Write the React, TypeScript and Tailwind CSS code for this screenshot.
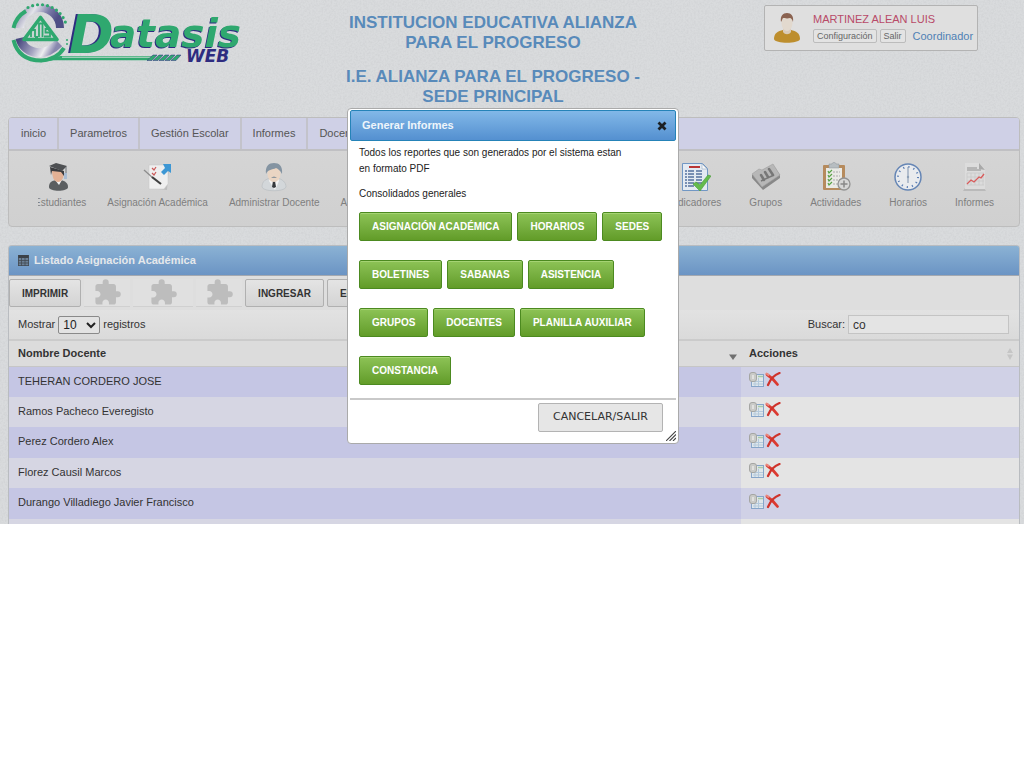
import React from "react";
import { MdExtension } from "react-icons/md";

const menu = ["inicio", "Parametros", "Gestión Escolar", "Informes", "Docentes"];

const reportRows = [
  ["ASIGNACIÓN ACADÉMICA", "HORARIOS", "SEDES"],
  ["BOLETINES", "SABANAS", "ASISTENCIA"],
  ["GRUPOS", "DOCENTES", "PLANILLA AUXILIAR"],
  ["CONSTANCIA"],
];

const teachers = [
  "TEHERAN CORDERO JOSE",
  "Ramos Pacheco Everegisto",
  "Perez Cordero Alex",
  "Florez Causil Marcos",
  "Durango Villadiego Javier Francisco",
];

function Grain() {
  return (
    <svg className="absolute inset-0 -z-10 h-full w-full" aria-hidden="true">
      <filter id="grain">
        <feTurbulence type="fractalNoise" baseFrequency="0.55" numOctaves="2" seed="4" />
        <feColorMatrix type="matrix" values="0 0 0 0 0.45  0 0 0 0 0.46  0 0 0 0 0.48  0.9 0 0 0 -0.33" />
      </filter>
      <rect width="100%" height="100%" filter="url(#grain)" opacity="0.45" />
    </svg>
  );
}

function Logo() {
  return (
    <svg viewBox="0 0 240 66" className="h-[66px] w-[240px]" role="img" aria-label="Datasis WEB">
      <defs>
        <linearGradient id="ringTop" x1="0" x2="1" y1="0" y2="0.3">
          <stop offset="0" stopColor="#8d8fae" />
          <stop offset="0.35" stopColor="#e4e4ea" />
          <stop offset="0.7" stopColor="#7c7ca8" />
          <stop offset="1" stopColor="#4f4f86" />
        </linearGradient>
        <linearGradient id="ringBottom" x1="0" x2="1" y1="0" y2="0.2">
          <stop offset="0" stopColor="#48487f" />
          <stop offset="0.5" stopColor="#a9a9c4" />
          <stop offset="0.75" stopColor="#ededf0" />
          <stop offset="1" stopColor="#8888ae" />
        </linearGradient>
      </defs>
      <path d="M12 28A20 20 0 0 1 52 28" fill="none" stroke="url(#ringTop)" strokeWidth="8" />
      <path d="M12 38C15 52 34 60 51 43" fill="none" stroke="url(#ringBottom)" strokeWidth="9" />
      <path d="M5.500 28A26 26 0 0 1 18 11" fill="none" stroke="#2fa86f" strokeWidth="4" />
      <path d="M20 7.500A27 27 0 0 1 58.500 26" fill="none" stroke="#2fa86f" strokeWidth="3.200" strokeLinecap="round" strokeDasharray="0 5" />
      <path d="M59 40V47" fill="none" stroke="#2fa86f" strokeWidth="2" strokeLinecap="round" strokeDasharray="0 4" />
      <path d="M5.500 40C9 54 19 60.500 33 60.500C44 60 51 56 56 48" fill="none" stroke="#2fa86f" strokeWidth="4" />
      <path d="M32 62.500C42 60 48 60 54 60.300H140L144 56H52" fill="#2fa86f" />
      <path d="M54 57.200H143" stroke="#e1e4e3" strokeWidth="0.900" />
      {[139, 145, 151, 157, 163].map((x) => (
        <path key={x} d={`M${x} 60.500l6-5.500h4l-5 5.500z`} fill="#2fa86f" stroke="#2e2c80" strokeWidth="0.500" />
      ))}
      <path d="M32.500 17.500 49 39.500H16z" fill="#c9d5d3" stroke="#2fa86f" strokeWidth="3.600" strokeLinejoin="round" />
      <path d="M23 37v-7h4v7M27 37h3M31 37V23.500h3.500V37M42.500 29h-5v3.500h4.500v4h-6" fill="none" stroke="#2fa86f" strokeWidth="1.800" />
      <g className="font-['DejaVu_Sans',sans-serif] font-bold italic">
        <g className="[filter:drop-shadow(-2px_0.500px_0_#2e2c80)]">
          <text x="61" y="53" fontSize="54" fill="#2fa86f">D</text>
        </g>
        <g className="[filter:drop-shadow(-1px_1px_0_#2e2c80)]">
          <text x="102" y="47" fontSize="39" fill="#2fa86f">atasis</text>
        </g>
        <text x="178" y="62" fontSize="17" fill="#2e2c80">WEB</text>
      </g>
    </svg>
  );
}

function UserAvatar() {
  return (
    <svg viewBox="0 0 28 32" className="h-8 w-7" aria-hidden="true">
      <path d="M1 27c0-6 4-8 9-9h8c5 1 9 3 9 9-1 5-25 5-26 0z" fill="#bd8e2d" />
      <path d="M10 16h8v4c-2 3-6 3-8 0z" fill="#d9cbb9" />
      <ellipse cx="14" cy="11" rx="5.500" ry="8" fill="#e2d9ce" />
      <path d="M8 10C7 4 10 1 14 1s7 3 6 9c-1-3-2-4-3-4-3 1-6 0-7 0-1 1-1 3-2 4z" fill="#8a6250" />
    </svg>
  );
}

function StudentIcon() {
  return (
    <svg viewBox="0 0 30 30" className="h-[30px] w-[30px]" aria-hidden="true">
      <path d="M4 25c0-5 3-6 7-7h5c4 1 7 3 7 7 0 5-19 5-19 0z" fill="#5b5e60" />
      <path d="M10 18l4 5 3-5z" fill="#f0f0f0" />
      <path d="M7 8c0 7 2 12 6 12s6-5 6-11z" fill="#e3b195" />
      <path d="M5 5l14 4v5l-3-4-9-1-1 4z" fill="#3b3c3f" />
      <path d="M4 4 11 1l11 3-5 5z" fill="#4e5053" />
      <path d="M21 5v9" stroke="#6d7278" strokeWidth="1" />
      <path d="M19 11h3v6h-3z" fill="#a9bdd4" />
    </svg>
  );
}

function AssignmentIcon() {
  return (
    <svg viewBox="0 0 30 30" className="h-[30px] w-[30px]" aria-hidden="true">
      <path d="M7 6h19l-2 22-17-2z" fill="#bdbdbd" />
      <path d="M6 3h19v19l-4 5H6z" fill="#efefef" stroke="#c7c7c7" strokeWidth="0.500" />
      <path d="M9 6l2 2 2-3M9 11l2 2 2-3" fill="none" stroke="#cb5a5a" strokeWidth="1.200" />
      <path d="M20 2h8v9l-3-2-4 4-3-3 4-4z" fill="#3d97d4" />
      <path d="M1 8l9 8" stroke="#8d8d8d" strokeWidth="1.400" />
      <path d="M9 15l9 7" stroke="#3f3f3f" strokeWidth="2.200" />
    </svg>
  );
}

function TeacherIcon() {
  return (
    <svg viewBox="0 0 30 30" className="h-[30px] w-[30px]" aria-hidden="true">
      <path d="M3 25c0-6 4-8 9-9h6c5 1 9 4 9 9-1 5-23 5-24 0z" fill="#d3d7da" stroke="#aeb4b9" strokeWidth="0.500" />
      <path d="M11 16l4 6 4-6 1 3-4 9-6-9z" fill="#f4f4f4" />
      <path d="M14 19h2l1 6-2 1-2-1z" fill="#36393d" />
      <ellipse cx="15" cy="12" rx="6.500" ry="8" fill="#ead5c3" />
      <path d="M7 12C6 4 10 1 15 1s9 3 8 11c-2-4-4-5-6-6-4 2-8 1-10 6z" fill="#8494a2" />
      <path d="M12 16c2-2 4-2 6 0z" fill="#8f989e" />
    </svg>
  );
}

function IndicatorsIcon() {
  return (
    <svg viewBox="0 0 30 30" className="h-[30px] w-[30px]" aria-hidden="true">
      <path d="M1.500 1.500h20l5 5v22h-25z" fill="#e3eaf2" stroke="#7197c4" />
      <path d="M21 2l5 5h-5z" fill="#f9f9f9" stroke="#98acc2" strokeWidth="0.600" />
      <path d="M8 5h11" stroke="#b93636" strokeWidth="2" />
      {[9, 12, 15, 18, 21, 24].map((y) => (
        <path key={y} d={`M4 ${y}h2m1 0h6m2 0h6`} stroke="#55719f" strokeWidth="1.500" />
      ))}
      <path d="M12 22l3-2 4 3 8-10 3 1-11 15z" fill="#64bb4d" stroke="#479b35" strokeWidth="0.600" />
    </svg>
  );
}

function GroupsIcon() {
  return (
    <svg viewBox="0 0 30 30" className="h-[30px] w-[30px]" aria-hidden="true">
      <path d="M1 13 22 3l7 10v3L12 28 1 16z" fill="#888" />
      <path d="M1 12 8 7l3 1L22 2l7 11L11 25z" fill="#b7b7b7" stroke="#a0a0a0" strokeWidth="0.600" />
      <path d="M10 13l3 5m1-8l3 5m1-8l4 6" stroke="#777" strokeWidth="2.500" strokeLinecap="round" />
      <path d="M10 19l13-6" stroke="#777" strokeWidth="1.500" />
    </svg>
  );
}

function ActivitiesIcon() {
  return (
    <svg viewBox="0 0 30 30" className="h-[30px] w-[30px]" aria-hidden="true">
      <rect x="2" y="3" width="22" height="25" rx="1" fill="#b68b5d" />
      <path d="M5 6h16v20H5z" fill="#eaeae6" />
      <path d="M8 2h3c0-2 4-2 4 0h3v4H8z" fill="#b7bdc1" stroke="#8e9599" strokeWidth="0.500" />
      {[10, 14, 18, 22].map((y) => (
        <g key={y} fill="none">
          <path d={`M7 ${y - 1}l1 2 3-3`} stroke="#58a245" strokeWidth="1.200" />
          <path d={`M12 ${y}h7`} stroke="#aaa" strokeWidth="1" strokeDasharray="2 1" />
        </g>
      ))}
      <circle cx="23" cy="22" r="6" fill="#d6d6d6" stroke="#939393" strokeWidth="1.300" />
      <path d="M23 18.500v7M19.500 22h7" stroke="#888" strokeWidth="1.500" />
    </svg>
  );
}

function ClockIcon() {
  return (
    <svg viewBox="0 0 30 30" className="h-[30px] w-[30px]" aria-hidden="true">
      <circle cx="15" cy="15" r="13" fill="#e9ebee" stroke="#6686b5" strokeWidth="1.500" />
      <circle cx="15" cy="15" r="10" fill="none" stroke="#5a7db3" strokeWidth="2" strokeDasharray="1.200 4.036" />
      <path d="M15 5v16" stroke="#8fa0b8" strokeWidth="1.200" />
      <circle cx="15" cy="15" r="1.200" fill="#8fa0b8" />
    </svg>
  );
}

function ReportIcon() {
  return (
    <svg viewBox="0 0 30 30" className="h-[30px] w-[30px]" aria-hidden="true">
      <path d="M3 29h23l-2-3H5z" fill="#bababa" />
      <path d="M5 1h14l6 6v20H5z" fill="#dcdcdc" />
      <path d="M19 1l6 7-6-1z" fill="#a9a9a9" />
      <path d="M7 6h10M7 8h14" stroke="#a9a9a9" strokeWidth="1.500" />
      <path d="M7 11v12M11 11v12M15 11v12M19 11v12M23 11v12M7 11h17M7 15h17M7 19h17M7 23h17" stroke="#c6c6c6" strokeWidth="0.700" />
      <path d="M7 22l4-4 3 2 5-5 2 1 3-4" fill="none" stroke="#d95b5b" strokeWidth="1.300" />
    </svg>
  );
}

function TableIcon() {
  return (
    <svg viewBox="0 0 11 11" className="h-[11px] w-[11px]" aria-hidden="true">
      <path d="M0 0h11v11H0z" fill="#6b8096" />
      <path d="M0 0h11v3H0z" fill="#3b4148" />
      <path d="M.5 0v11M3.500 3v8M7 3v8M10.500 0v11M0 5.500h11M0 8h11M0 10.500h11" stroke="#434a52" strokeWidth="0.800" />
    </svg>
  );
}

function DetailIcon() {
  return (
    <svg viewBox="0 0 16 16" className="h-4 w-4" aria-hidden="true">
      <rect x="2.500" y="2.500" width="12" height="12" fill="#dfe7eb" stroke="#86a5c9" />
      <path d="M9 4.500h5" stroke="#a9cba6" strokeWidth="1.500" />
      <path d="M9.500 6v8M4 9.500h10M4 12h10M6 10v4" stroke="#b4c9dc" strokeWidth="1" />
      <rect x="0.500" y="0.500" width="7" height="9" rx="2.500" fill="#c9cac7" stroke="#a5a6a3" />
      <path d="M4 3v4" stroke="#e9e9e7" strokeWidth="1.500" />
    </svg>
  );
}

function DeleteIcon() {
  return (
    <svg viewBox="0 0 16 16" className="h-4 w-4" aria-hidden="true">
      <path d="M2 2.500C6 5 9 8 12.500 12.500" fill="none" stroke="#db3a31" strokeWidth="2.800" strokeLinecap="round" />
      <path d="M14.500 1C9 3 5 8 3 13" fill="none" stroke="#cf332b" strokeWidth="2.200" strokeLinecap="round" />
      <path d="M1.500 1.500l2 1.500" stroke="#ea8a80" strokeWidth="2" strokeLinecap="round" />
    </svg>
  );
}

function Tool({ icon, label, className = "" }: { icon: React.ReactNode; label: string; className?: string }) {
  return (
    <a href="#" className={`flex shrink-0 flex-col items-center gap-[3px] text-[10px] leading-4 text-[#7f7f7f] ${className}`}>
      {icon}
      <span>{label}</span>
    </a>
  );
}

const grayButton =
  "h-7 rounded-xs border border-[#b0b0b0] bg-linear-to-b from-[#e4e4e4] to-[#d4d4d4] px-3 text-[10px] font-bold text-[#333]";

function ReportsDialog() {
  return (
    <div
      role="dialog"
      aria-labelledby="dialog-title"
      className="absolute top-[108px] left-[347px] z-10 w-[332px] rounded-sm border border-[#aaa] bg-white px-0.5 pt-px pb-0.5"
    >
      <div className="flex h-[31px] items-center justify-between rounded-xs border border-[#2583b8] bg-linear-to-b from-[#82b8e8] to-[#5490d0] pr-2 pl-[11px]">
        <h2 id="dialog-title" className="text-[11px] font-bold text-[#eef5fb]">Generar Informes</h2>
        <button type="button" aria-label="Cerrar" className="flex h-2.5 w-2.5 items-center justify-center">
          <svg viewBox="0 0 10 10" className="h-2.5 w-2.5" aria-hidden="true">
            <path d="M1.500 1.500l7 7M8.500 1.500l-7 7" stroke="#1b2024" strokeWidth="2.800" />
          </svg>
        </button>
      </div>
      <div className="px-[9px] pt-1 text-[10px] leading-4 text-[#222]">
        <p className="max-w-[270px]">Todos los reportes que son generados por el sistema estan en formato PDF</p>
        <p className="mt-[9px]">Consolidados generales</p>
        <div className="mt-2.5 flex flex-col gap-[19px]">
          {reportRows.map((row) => (
            <div key={row[0]} className="flex gap-[5px]">
              {row.map((label) => (
                <button
                  type="button"
                  key={label}
                  className="h-[29px] rounded-xs border border-[#4c8a20] bg-linear-to-b from-[#8dc356] to-[#629c28] px-3 font-bold whitespace-nowrap text-white shadow-[inset_0_1px_0_#a5d373]"
                >
                  {label}
                </button>
              ))}
            </div>
          ))}
        </div>
      </div>
      <div className="mt-[13px] flex justify-end border-t-2 border-[#c9c9c9] pt-[3px] pr-[13px] pb-[9px]">
        <button type="button" className="h-[29px] rounded-xs border border-[#b3b3b3] bg-[#e6e6e6] px-3.5 font-['DejaVu_Sans',sans-serif] text-[11px] text-[#333]">
          CANCELAR/SALIR
        </button>
      </div>
      <svg viewBox="0 0 10 10" className="absolute right-0.5 bottom-0.5 h-2.5 w-2.5" aria-hidden="true">
        <path d="M0 10 10 0M3.500 10 10 3.500M7 10l3-3" stroke="#444" strokeWidth="1.100" />
      </svg>
    </div>
  );
}

export default function App() {
  return (
    <div className="relative isolate overflow-hidden bg-[#d9dbdd] font-['Liberation_Sans',Arial,sans-serif] text-[11px] text-[#333]">
      <Grain />
      <header className="grid h-[117px] grid-cols-[343px_300px_1fr] items-start">
        <a href="#" className="pl-2"><Logo /></a>
        <div className="flex flex-col gap-3.5 pt-[13px] text-center text-[17px] leading-5 font-bold text-[#588aba]">
          <h1>INSTITUCION EDUCATIVA ALIANZA PARA EL PROGRESO</h1>
          <h2>I.E. ALIANZA PARA EL PROGRESO - SEDE PRINCIPAL</h2>
        </div>
        <div className="mt-[5px] mr-[46px] flex h-[46px] w-[214px] items-center gap-3 justify-self-end rounded-xs border border-[#b3b3b3] bg-[#dfdfdf] pl-2">
          <UserAvatar />
          <div className="flex flex-col gap-0.5 pb-[3px] whitespace-nowrap">
            <p className="leading-4 text-[#b84a68]">MARTINEZ ALEAN LUIS</p>
            <div className="flex items-center gap-[3px] leading-3">
              <button type="button" className="rounded-xs border border-[#bcbcbc] bg-[#e3e3e3] px-[3px] text-[9px] text-[#666]">Configuración</button>
              <button type="button" className="rounded-xs border border-[#bcbcbc] bg-[#e3e3e3] px-[3px] text-[9px] text-[#666]">Salir</button>
              <a href="#" className="pl-1 text-[#4f81b5]">Coordinador</a>
            </div>
          </div>
        </div>
      </header>

      <main className="pr-1 pl-2">
        <section className="rounded-sm border border-[#bdbdbd] bg-linear-to-b from-[#d7d7d7] to-[#d0d0d0]">
          <nav className="flex h-[33px] overflow-hidden rounded-t-xs border-b-2 border-[#c0c0c3] bg-[#cfd0e6] text-[#555]">
            {menu.map((item) => (
              <a key={item} href="#" className="flex items-center border-r-2 border-[#c3c3cb] px-[11px] first:pl-3">
                {item}
              </a>
            ))}
          </nav>
          <div className="flex h-[75px] justify-between pt-[11px]">
            <div className="ml-[29px] flex gap-[21px] overflow-hidden">
              <Tool icon={<StudentIcon />} label="Estudiantes" className="-ml-1" />
              <Tool icon={<AssignmentIcon />} label="Asignación Académica" />
              <Tool icon={<TeacherIcon />} label="Administrar Docente" />
              <Tool icon={<GroupsIcon />} label="Asistencia" />
            </div>
            <div className="mr-[25px] flex gap-7">
              <Tool icon={<IndicatorsIcon />} label="Indicadores" />
              <Tool icon={<GroupsIcon />} label="Grupos" />
              <Tool icon={<ActivitiesIcon />} label="Actividades" />
              <Tool icon={<ClockIcon />} label="Horarios" />
              <Tool icon={<ReportIcon />} label="Informes" />
            </div>
          </div>
        </section>

        <section className="mt-[18px] rounded-t-sm border border-b-0 border-[#b9bcc0] bg-[#dedede]">
          <h3 className="flex h-[30px] items-center gap-[5px] rounded-t-xs border-b border-[#a3a8b0] bg-linear-to-b from-[#8bb2d4] to-[#6b94c4] pl-[9px] font-bold text-[#e5e8eb]">
            <TableIcon />
            Listado Asignación Académica
          </h3>
          <div className="flex h-[34px] items-start gap-[3px] pt-[3px]">
            <button type="button" className={grayButton}>IMPRIMIR</button>
            <span className="flex h-7 w-[46px] items-center justify-center border-b border-[#d0d0d0] bg-[#e0e0e0]"><MdExtension size={29} color="#bdbdbd" /></span>
            <span className="flex h-7 w-[60px] items-center justify-center border-b border-[#d0d0d0] bg-[#e0e0e0]"><MdExtension size={29} color="#bdbdbd" /></span>
            <span className="flex h-7 w-[46px] items-center justify-center border-b border-[#d0d0d0] bg-[#e0e0e0]"><MdExtension size={29} color="#bdbdbd" /></span>
            <button type="button" className={grayButton}>INGRESAR</button>
            <button type="button" className={grayButton}>EDITAR</button>
          </div>
          <div className="flex h-[29px] items-center justify-between bg-linear-to-b from-[#e2e2e2] to-[#dadada] pr-2.5 pl-[9px]">
            <label className="flex items-center gap-[3px]">
              Mostrar
              <select className="h-[18px] w-[42px] rounded-xs border border-[#8a8a8a] bg-[#e3e3e3] text-xs text-[#222]" defaultValue="10">
                <option>10</option>
                <option>25</option>
                <option>50</option>
              </select>
              registros
            </label>
            <label className="flex items-center gap-[3px]">
              Buscar:
              <input type="text" defaultValue="co" className="h-[19px] w-[161px] border border-[#c4c4c4] bg-[#e4e4e4] px-1 text-xs text-[#333]" />
            </label>
          </div>
          <table className="w-full table-fixed border-collapse text-left">
            <colgroup>
              <col />
              <col className="w-[278px]" />
            </colgroup>
            <thead>
              <tr className="h-[26px] border-t-2 border-b border-t-[#cbcbcb] border-b-[#c6c6c6] bg-[#dcdcdc]">
                <th className="p-0 pr-1 pl-[9px]">
                  <div className="flex items-center justify-between">
                    Nombre Docente
                    <svg viewBox="0 0 8 14" className="h-3.5 w-2" aria-hidden="true"><path d="M0 8.500h8l-4 5.500z" fill="#707070" /></svg>
                  </div>
                </th>
                <th className="p-0 pr-[5px] pl-2">
                  <div className="flex items-center justify-between">
                    Acciones
                    <svg viewBox="0 0 8 14" className="h-3.5 w-2" aria-hidden="true"><path d="M1 7h6L4 2zM1 8.500h6l-3 5.500z" fill="#c5c5c5" /></svg>
                  </div>
                </th>
              </tr>
            </thead>
            <tbody>
              {teachers.map((name) => (
                <tr key={name} className="group odd:h-[31px] even:h-[30px]">
                  <td className="p-0 pb-0.5 pl-[9px] group-odd:bg-[#c5c6e4] group-even:bg-[#d6d6e3]">{name}</td>
                  <td className="p-0 pb-1 pl-2 group-odd:bg-[#d0d1e6] group-even:bg-[#e4e4e4]">
                    <div className="flex">
                      <button type="button" aria-label={`Ver ${name}`}><DetailIcon /></button>
                      <button type="button" aria-label={`Eliminar ${name}`}><DeleteIcon /></button>
                    </div>
                  </td>
                </tr>
              ))}
              <tr className="h-[5px]">
                <td className="bg-[#d6d6e3] p-0" />
                <td className="bg-[#e4e4e4] p-0" />
              </tr>
            </tbody>
          </table>
        </section>
      </main>
      <ReportsDialog />
    </div>
  );
}
